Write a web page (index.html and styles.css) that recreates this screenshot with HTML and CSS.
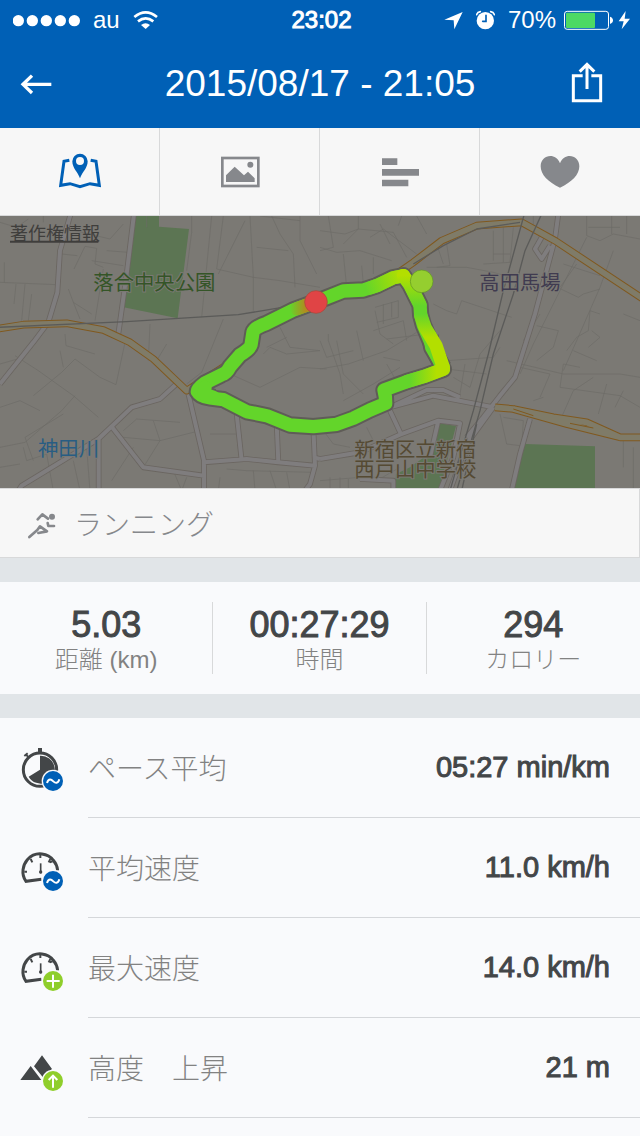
FILE: index.html
```html
<!DOCTYPE html>
<html lang="ja">
<head>
    <meta charset="UTF-8">
    <meta name="viewport" content="width=device-width, initial-scale=1.0">
    <title>2015/08/17 - 21:05</title>
    <link rel="stylesheet" href="styles.css">
</head>
<body>
    <header class="top">
        <div class="status">
            <div class="status-left">
                <svg width="67" height="20" viewBox="39 30 201 60" fill="#fff"><circle cx="55" cy="62" r="17"/><circle cx="97" cy="62" r="17"/><circle cx="139" cy="62" r="17"/><circle cx="181" cy="62" r="17"/><circle cx="223" cy="62" r="17"/></svg>
                <span>au</span>
                <svg width="25" height="20" viewBox="402 30 75 60" fill="none" stroke="#fff" stroke-width="8"><path d="M406 51Q440 23 474 51M417 64Q440 46 463 64"/><path d="M426 75Q440 64 453 75L440 87Z" fill="#fff" stroke="none"/></svg>
            </div>
            <time class="clock">23:02</time>
            <div class="status-right">
                <svg width="19" height="20" viewBox="371 30 57 60" fill="#fff"><path d="M427 36L402 88L400 61L372 59Z"/></svg>
                <svg width="19" height="20" viewBox="465 30 57 60" fill="none" stroke-linecap="round"><circle cx="493" cy="62" r="26" fill="#fff"/><path d="M467 44Q469 36 478 35M520 44Q518 36 509 35" stroke="#fff" stroke-width="5"/><path d="M495 46V64H485" stroke="#0060b6" stroke-width="5"/></svg>
                <div class="power">
                    <span>70%</span>
                    <svg width="66" height="20" viewBox="732 30 198 60"><rect x="733.5" y="34" width="132" height="54" rx="8" fill="none" stroke="#fff" stroke-width="3"/><rect x="738" y="38" width="87" height="46" rx="3" fill="#4cd964"/><path d="M870 50Q879 53 879 61T870 72Z" fill="#fff"/><path d="M917 33L896 64H911L905 88L930 56H914Z" fill="#fff"/></svg>
                </div>
            </div>
        </div>
        <div class="title-bar">
            <button class="icon-button" type="button" aria-label="戻る">
                <svg width="32" height="24" viewBox="60 216 96 72" fill="none" stroke="#fff" stroke-width="10"><path d="M96 227L69 253L96 279M69 253H154"/></svg>
            </button>
            <h1>2015/08/17 - 21:05</h1>
            <button class="icon-button share" type="button" aria-label="共有">
                <svg width="32" height="46" viewBox="753 183 96 138" fill="none" stroke="#fff" stroke-width="9"><path d="M788 227H760V302H842V227H814M801 267V195M779 215L801 193L823 215"/></svg>
            </button>
        </div>
    </header>

    <nav class="tabs">
        <button class="tab active" type="button" aria-label="地図">
            <svg width="44" height="43" viewBox="174 66 132 129"><path d="M208 97L192 100L182 172L210 167L240 176L270 167L298 172L288 100L272 97" fill="none" stroke="currentColor" stroke-width="9"/><path fill="currentColor" fill-rule="evenodd" d="M240 151C233 132 217 120 217 100A23 23 0 0 1 263 100C263 120 247 132 240 151ZM240 87A12 12 0 1 0 240 111A12 12 0 1 0 240 87Z"/></svg>
        </button>
        <button class="tab" type="button" aria-label="写真">
            <svg width="44" height="43" viewBox="653 66 132 129"><rect x="666" y="90" width="108" height="84" fill="none" stroke="currentColor" stroke-width="8"/><path fill="currentColor" d="M677 162V142L703 116L731 142L743 131L763 151V162Z"/><circle cx="750" cy="110" r="9" fill="currentColor"/></svg>
        </button>
        <button class="tab" type="button" aria-label="ラップ">
            <svg width="44" height="43" viewBox="173 66 132 129" fill="currentColor"><path d="M185 91H231V111H185ZM185 123H296V143H185ZM185 155H264V175H185Z"/></svg>
        </button>
        <button class="tab" type="button" aria-label="心拍数">
            <svg width="44" height="43" viewBox="654 66 132 129" fill="currentColor"><path d="M720 179C684 162 662 140 662 115C662 80 707 72 720 106C733 72 778 80 778 115C778 140 756 162 720 179Z"/></svg>
        </button>
    </nav>

    <svg class="map" viewBox="0 6 1920 816" preserveAspectRatio="xMidYMid slice">
        <defs>
            <g id="roads">
                <path d="M212 0L180 110L172 235L145 325L100 385L0 510M402 0L380 180L355 360M535 505L480 555L395 580L295 675L65 815L55 830M296 675V830M335 638L430 760L612 785M563 530L612 740V830M612 745L740 735L835 745L945 755M710 600L725 740M830 630L835 745M940 640L945 755L930 810L915 830"/>
                <path d="M1675 0L1665 75L1605 300L1545 490L1500 545L1450 610L1400 670M1625 70L1605 105L1625 135M1605 105L1625 135L1650 95M1170 580L1280 528H1330L1380 550M1170 580L1300 545L1480 580M1170 590L1205 665M960 735L1080 715L1200 662L1315 620L1380 628L1360 730L1320 830M1315 620L1290 730M1590 615L1560 720L1535 830M1080 795L1180 800V830M1480 580L1400 690L1350 830M940 730L960 735"/>
            </g>
            <g id="avenues">
                <path d="M-10 345L70 332L200 328L310 348L390 385L460 435L560 530L700 440"/>
                <path d="M1060 225L1190 180L1240 145L1325 80L1430 35L1565 25L1665 80L1930 255M1485 580L1540 585L1660 610L1760 625L1860 670H1930M1540 585L1700 630L1860 670"/>
            </g>
            <g id="route">
                <path d="M948 263L880 288L800 328Q763 340 759 355L753 393Q750 405 720 423L690 458Q680 478 665 482L615 507Q590 525 592 533Q600 548 630 552L670 557L740 593L800 605L870 633L940 638L1010 631L1060 613L1110 588L1157 568L1156 548L1152 528L1220 503L1270 488L1330 466L1300 403L1270 333L1262 303L1260 273L1230 213L1210 185L1180 191L1130 215L1090 228L1030 231L980 251L948 263"/>
                <path d="M615 520L612 540L640 550M1290 365L1295 400L1330 460"/>
            </g>
            <linearGradient id="finish" gradientUnits="userSpaceOnUse" x1="870" x2="920" y1="0" y2="0"><stop offset="0" stop-color="#63d52a"/><stop offset="1" stop-color="#b7851f"/></linearGradient>
            <linearGradient id="north" gradientUnits="userSpaceOnUse" x1="1100" y1="230" x2="1210" y2="190"><stop offset="0" stop-color="#63d52a"/><stop offset="1" stop-color="#b3df00"/></linearGradient>
            <linearGradient id="start" gradientUnits="userSpaceOnUse" x1="0" y1="185" x2="0" y2="275"><stop offset="0" stop-color="#b3df00"/><stop offset="1" stop-color="#63d52a"/></linearGradient>
            <linearGradient id="east" gradientUnits="userSpaceOnUse" x1="0" y1="300" x2="0" y2="370"><stop offset="0" stop-color="#63d52a"/><stop offset="1" stop-color="#b3df00"/></linearGradient>
            <linearGradient id="south" gradientUnits="userSpaceOnUse" x1="1230" x2="1310" y1="0" y2="0"><stop offset="0" stop-color="#63d52a"/><stop offset="1" stop-color="#b3df00"/></linearGradient>
        </defs>

        <rect class="land" x="0" y="6" width="1920" height="816"/>
        <path class="park" d="M408 0H477V38L567 45L533 313L371 280ZM1320 628L1368 636L1350 705L1318 830H1185L1188 780L1230 760L1300 710ZM1575 690L1785 697V830H1537Z"/>

        <g class="streets">
            <path d="M0 25L50 40L85 15M130 6V25M185 120L232 125M222 165L255 97L290 103L285 150L310 160M275 140L370 155M320 110L385 115M225 50L330 75L370 30M0 205L170 212M13 145V205M48 210L42 270M75 210L65 320M95 240L85 320M205 225L220 265L275 300M220 265L240 315M310 165L285 320M440 6V40M575 6V55L560 170M635 6L605 310M670 6L650 165L760 190L840 200L960 220M750 6L760 190V290M770 100L865 110M815 6L840 60L880 120L885 220M900 6V80L950 180M780 6L900 20M655 180L735 20M450 330L445 440M375 385L348 512L300 490L225 435L185 475L100 545M45 425L115 470L220 545L295 610M195 360L198 395L285 420M180 410L190 460M0 700L75 685L185 590L225 545M0 580L60 560L120 590M0 450L70 430M500 390L470 440M670 315L605 475L560 510M840 340L870 400L960 410M800 400L860 370M690 480L780 520L900 460L980 465M790 420L810 400L860 420L960 410M370 650L410 615L540 625M460 620L480 680M370 670L480 680L600 650M430 760L480 680M335 800L400 700M520 770L545 830M560 790L545 830M630 660H710M680 765L740 770L940 775M660 790L655 830M760 770L765 830M810 770L830 830M860 775L870 830M70 700L80 740L140 720L160 830M100 740L75 670L190 600M220 740L240 830M260 700L270 830M0 760L60 750"/>
            <path d="M960 50L1035 60L1075 45L1180 55L1220 130M985 6L1000 100L960 110M1075 6V45L1030 90M1110 70L1150 45L1250 120M1195 35L1205 6M1250 6L1280 60M960 100L1010 115L1080 110L1175 140M1030 120L1040 220M1085 155L1090 210M1120 180V130M1170 90L1140 30M1310 90L1330 150M1340 90L1350 155L1310 160M1480 50V140M1510 40V145M1540 40L1530 145L1450 150M1480 120H1530M1280 160H1400L1480 175L1530 190M1600 6V40M1760 6V65L1800 80L1840 60L1920 75M1765 40H1860M1835 6V60M1880 6V60M1760 70L1600 390L1560 480M1730 150L1680 220L1600 180M1690 150L1800 185M1840 110L1800 220L1730 380L1690 470M1630 200L1735 250L1750 240L1800 225M1610 335L1675 350L1660 400L1610 440M1620 300L1570 380M1700 410L1730 370L1765 350L1770 290L1800 300M1765 400L1800 370L1775 350M1720 410L1790 440M1920 320L1870 300M1560 460L1650 480L1620 550M1680 520L1690 450L1740 460M1520 440L1690 480L1860 480L1920 490M1780 490L1720 530L1680 620M1820 510L1795 600M1870 530L1845 580M1600 560L1630 550M1680 520L1860 545L1920 580M1370 300L1385 260L1535 310M1300 270L1340 290L1370 300M1125 280L1195 260V310L1130 325M1150 270V330M1175 265V310M1120 350L1210 320L1220 380M1160 375L1280 360M1125 290L1140 360L1180 390M960 465L1045 450L1160 410L1250 355M1030 540L1020 480L985 380V360M1090 440L1070 350M1010 380L1030 480L1090 540M1160 450L1200 520M1200 440L1150 430M1030 560L1120 510L1200 460M960 380L980 430L1060 410M1340 440L1480 430L1500 400M1395 450L1380 540M1340 465L1460 480M1360 490L1410 520L1440 420L1500 350M1500 600L1520 690L1560 695M1510 610L1570 620L1565 700M960 800L1080 790M990 790V830M1020 790V830M1045 795V830M1130 800L1200 760M970 650L1000 690L1050 700M1900 700V830M1870 680V760M1100 640L1120 680"/>
        </g>

        <use href="#roads" class="road-edge"/>
        <use href="#roads" class="road"/>
        <use href="#avenues" class="avenue-edge"/>
        <use href="#avenues" class="avenue"/>
        <path class="avenue-line" d="M1540 585L1600 605M1710 628L1780 642"/>

        <path class="rail" d="M-5 340L380 323L715 302L860 278M1240 150L1330 95L1430 45L1560 25M1573 0L1510 230L1465 420L1420 590L1350 830M1625 0L1575 110L1540 240L1480 420L1440 590L1370 830M1430 630L1385 830"/>

        <use href="#route" class="route-edge"/>
        <use href="#route" class="route"/>
        <path class="route" stroke="url(#finish)" d="M890 284L948 263"/>
        <path class="route" stroke="url(#north)" d="M1110 222L1130 215L1180 191L1210 185"/>
        <path class="route" stroke="url(#start)" d="M1210 185L1230 213L1260 273"/>
        <path class="route" stroke="url(#east)" d="M1262 303L1275 340L1308 395L1330 460"/>
        <path class="route" stroke="url(#south)" d="M1220 503L1270 488L1330 466"/>
        <circle cx="1265" cy="202" r="34" fill="#95ce2f" stroke="#5f9425" stroke-width="2"/>
        <circle cx="948" cy="264" r="34" fill="#e04445" stroke="#a34a3a" stroke-width="2"/>

        <g class="places">
            <text x="280" y="229" class="green">落合中央公園</text>
            <text x="114" y="727" class="water">神田川</text>
            <text x="1438" y="227" class="station">高田馬場</text>
            <text x="1063" y="730" class="school">新宿区立新宿</text>
            <text x="1063" y="790" class="school">西戸山中学校</text>
        </g>
        <a href="#" class="legal"><text x="30" y="79">著作権情報</text><path d="M30 83H295" stroke="#3f3e3c" stroke-width="6"/></a>
    </svg>

    <div class="activity">
        <svg width="30" height="32" viewBox="81 80 90 96" fill="none" stroke="currentColor" stroke-width="8" stroke-linecap="round" stroke-linejoin="round"><circle cx="156" cy="109" r="9" fill="currentColor" stroke="none"/><path d="M113 117L127 102L144 115M143 128L145 137H162M88 170L112 149L120 138L141 153L115 158"/></svg>
        <span>ランニング</span>
    </div>

    <section class="stats">
        <div class="stat"><strong>5.03</strong><span>距離 (km)</span></div>
        <div class="stat"><strong>00:27:29</strong><span>時間</span></div>
        <div class="stat"><strong>294</strong><span>カロリー</span></div>
    </section>

    <ul class="details">
        <li>
            <svg width="44" height="48" viewBox="60 72 132 144"><g fill="none" stroke="#434648"><circle cx="120" cy="149" r="50" stroke-width="9"/><path d="M120 96V84" stroke-width="12"/><path d="M86 112L78 104M73 108L83 100" stroke-width="6"/></g><path fill="#434648" d="M120 149V107A42 42 0 1 1 86 170Z"/><circle cx="159" cy="183" r="34" fill="#f9fafc"/><circle cx="159" cy="183" r="30" fill="#0060b6"/><path d="M141 189C146 174 154 178 160 184S174 192 178 178" fill="none" stroke="#fff" stroke-width="6"/></svg>
            <div class="row"><span>ペース平均</span><strong>05:27 min/km</strong></div>
        </li>
        <li>
            <svg width="44" height="48" viewBox="60 72 132 144"><g fill="none" stroke="#434648"><path d="M124 178L78 184C62 162 69 134 82 119C109 90 146 102 160 121Q171 134 173 151" stroke-width="9"/><path d="M121 103V114M92 117L97 127M151 117L146 127M73 155H81M158 124L149 127" stroke-width="6"/><path d="M122 130V160" stroke-width="5"/></g><circle cx="122" cy="156" r="5" fill="#434648"/><circle cx="159" cy="183" r="34" fill="#f9fafc"/><circle cx="159" cy="183" r="30" fill="#0060b6"/><path d="M141 189C146 174 154 178 160 184S174 192 178 178" fill="none" stroke="#fff" stroke-width="6"/></svg>
            <div class="row"><span>平均速度</span><strong>11.0 km/h</strong></div>
        </li>
        <li>
            <svg width="44" height="48" viewBox="60 72 132 144"><g fill="none" stroke="#434648"><path d="M124 178L78 184C62 162 69 134 82 119C109 90 146 102 160 121Q171 134 173 151" stroke-width="9"/><path d="M121 103V114M92 117L97 127M151 117L146 127M73 155H81M158 124L149 127" stroke-width="6"/><path d="M122 130V160" stroke-width="5"/></g><circle cx="122" cy="156" r="5" fill="#434648"/><circle cx="159" cy="183" r="34" fill="#f9fafc"/><circle cx="159" cy="183" r="30" fill="#8fce2b"/><path d="M140 183H179M159 164V203" stroke="#fff" stroke-width="6"/></svg>
            <div class="row"><span>最大速度</span><strong>14.0 km/h</strong></div>
        </li>
        <li>
            <svg width="44" height="48" viewBox="60 72 132 144"><path fill="#434648" d="M61 180L92 138L124 180ZM126 106L156 147L128 171L102 139Z"/><circle cx="159" cy="183" r="34" fill="#f9fafc"/><circle cx="159" cy="183" r="30" fill="#8fce2b"/><path d="M159 203V168M146 180L159 167L172 180" fill="none" stroke="#fff" stroke-width="6"/></svg>
            <div class="row"><span>高度　上昇</span><strong>21 m</strong></div>
        </li>
    </ul>
</body>
</html>
```
FILE: styles.css
```css
* {
    box-sizing: border-box;
}

body {
    margin: 0;
    min-height: 100vh;
    background: #f9fafc;
    color: #434648;
    font-family: "Liberation Sans", "Noto Sans CJK JP", sans-serif;
}

svg {
    display: block;
    flex: none;
}

button {
    margin: 0;
    padding: 0;
    border: 0;
    background: none;
    color: inherit;
    font: inherit;
}

.top {
    background: #0060b6;
    color: #fff;
}

.status {
    display: grid;
    grid-template-columns: 1fr auto 1fr;
    align-items: center;
    height: 40px;
    padding: 0 10px 0 13px;
    font-size: 24px;
}

.status-left, .status-right, .power {
    display: flex;
    align-items: center;
    gap: 13px;
}

.status-right {
    justify-content: flex-end;
}

.power {
    gap: 8px;
}

.clock {
    -webkit-text-stroke: 1px;
}

.title-bar {
    display: grid;
    grid-template-columns: 1fr auto 1fr;
    align-items: center;
    height: 88px;
    padding: 0 37px 0 20px;
}

.title-bar h1 {
    margin: 0;
    padding-left: 17px;
    font-size: 37px;
    font-weight: 400;
}

.icon-button {
    justify-self: start;
}

.icon-button.share {
    justify-self: end;
}

.tabs {
    display: grid;
    grid-template-columns: repeat(4, 1fr);
    height: 88px;
    border-bottom: 1px solid #d8d9da;
    background: #f7f7f7;
    color: #86888c;
}

.tab {
    display: flex;
    align-items: center;
    justify-content: center;
    border-right: 1px solid #d8d9da;
}

.tab:last-child {
    border-right: 0;
}

.tab.active {
    color: #0060b6;
}

/* map */

.map {
    width: 100%;
    height: 272px;
    font-family: "Noto Sans CJK JP", sans-serif;
}

.land {
    fill: #7b7974;
}

.park {
    fill: #5c7553;
}

.streets, .road, .road-edge, .avenue, .avenue-edge, .avenue-line, .rail, .route, .route-edge {
    fill: none;
    stroke-linejoin: round;
}

.streets {
    stroke: #6d6b66;
    stroke-width: 2px;
}

.road-edge {
    stroke: #6b6661;
    stroke-width: 17px;
}

.road {
    stroke: #7f7d7e;
    stroke-width: 12px;
}

.avenue-edge {
    stroke: #80591f;
    stroke-width: 23px;
}

.avenue {
    stroke: #7f7b68;
    stroke-width: 17px;
}

.avenue-line {
    stroke: #80591f;
    stroke-width: 3px;
}

.rail {
    stroke: #5b5b59;
    stroke-width: 4px;
}

.route {
    stroke-width: 40px;
    stroke-linecap: round;
}

use.route {
    stroke: #63d52a;
}

.route-edge {
    stroke: #5f5d57;
    stroke-width: 52px;
}

.places text {
    font-size: 61px;
    paint-order: stroke;
    stroke: #7b7974;
    stroke-width: 6px;
}

.places .green {
    fill: #345527;
}

.places .water {
    fill: #285d83;
}

.places .station {
    fill: #403b50;
}

.places .school {
    fill: #554a33;
}

.legal text {
    fill: #3f3e3c;
    font-size: 54px;
}

/* summary */

.activity {
    display: flex;
    align-items: center;
    gap: 17px;
    height: 70px;
    padding: 0 27px;
    border: 1px solid #d8d9da;
    border-left: 0;
    background: #f7f7f7;
    color: #86888c;
    font-size: 28px;
    font-weight: 300;
}

.stats {
    display: grid;
    grid-template-columns: repeat(3, 1fr);
    padding: 20px 0;
    border: solid #e1e5e8;
    border-width: 24px 0;
}

.stat {
    display: flex;
    flex-direction: column;
    align-items: center;
    height: 72px;
    border-right: 1px solid #d8d9da;
}

.stat:last-child {
    border-right: 0;
}

.stat strong {
    font-size: 36px;
    line-height: 46px;
    font-weight: 400;
    -webkit-text-stroke: 1px;
}

.stat span {
    color: #828282;
    font-size: 24px;
    line-height: 24px;
    font-weight: 300;
}

.details {
    margin: 0;
    padding: 0;
    list-style: none;
}

.details li {
    display: flex;
    align-items: center;
    gap: 24px;
    padding-left: 20px;
}

.row {
    display: flex;
    flex: 1;
    align-items: center;
    justify-content: space-between;
    height: 100px;
    padding-right: 30px;
    border-bottom: 1px solid #d5d7da;
}

.row span {
    padding-bottom: 2px;
    color: #828282;
    font-size: 28px;
    font-weight: 300;
}

.row strong {
    font-size: 29px;
    font-weight: 400;
    -webkit-text-stroke: 1px;
}
```
